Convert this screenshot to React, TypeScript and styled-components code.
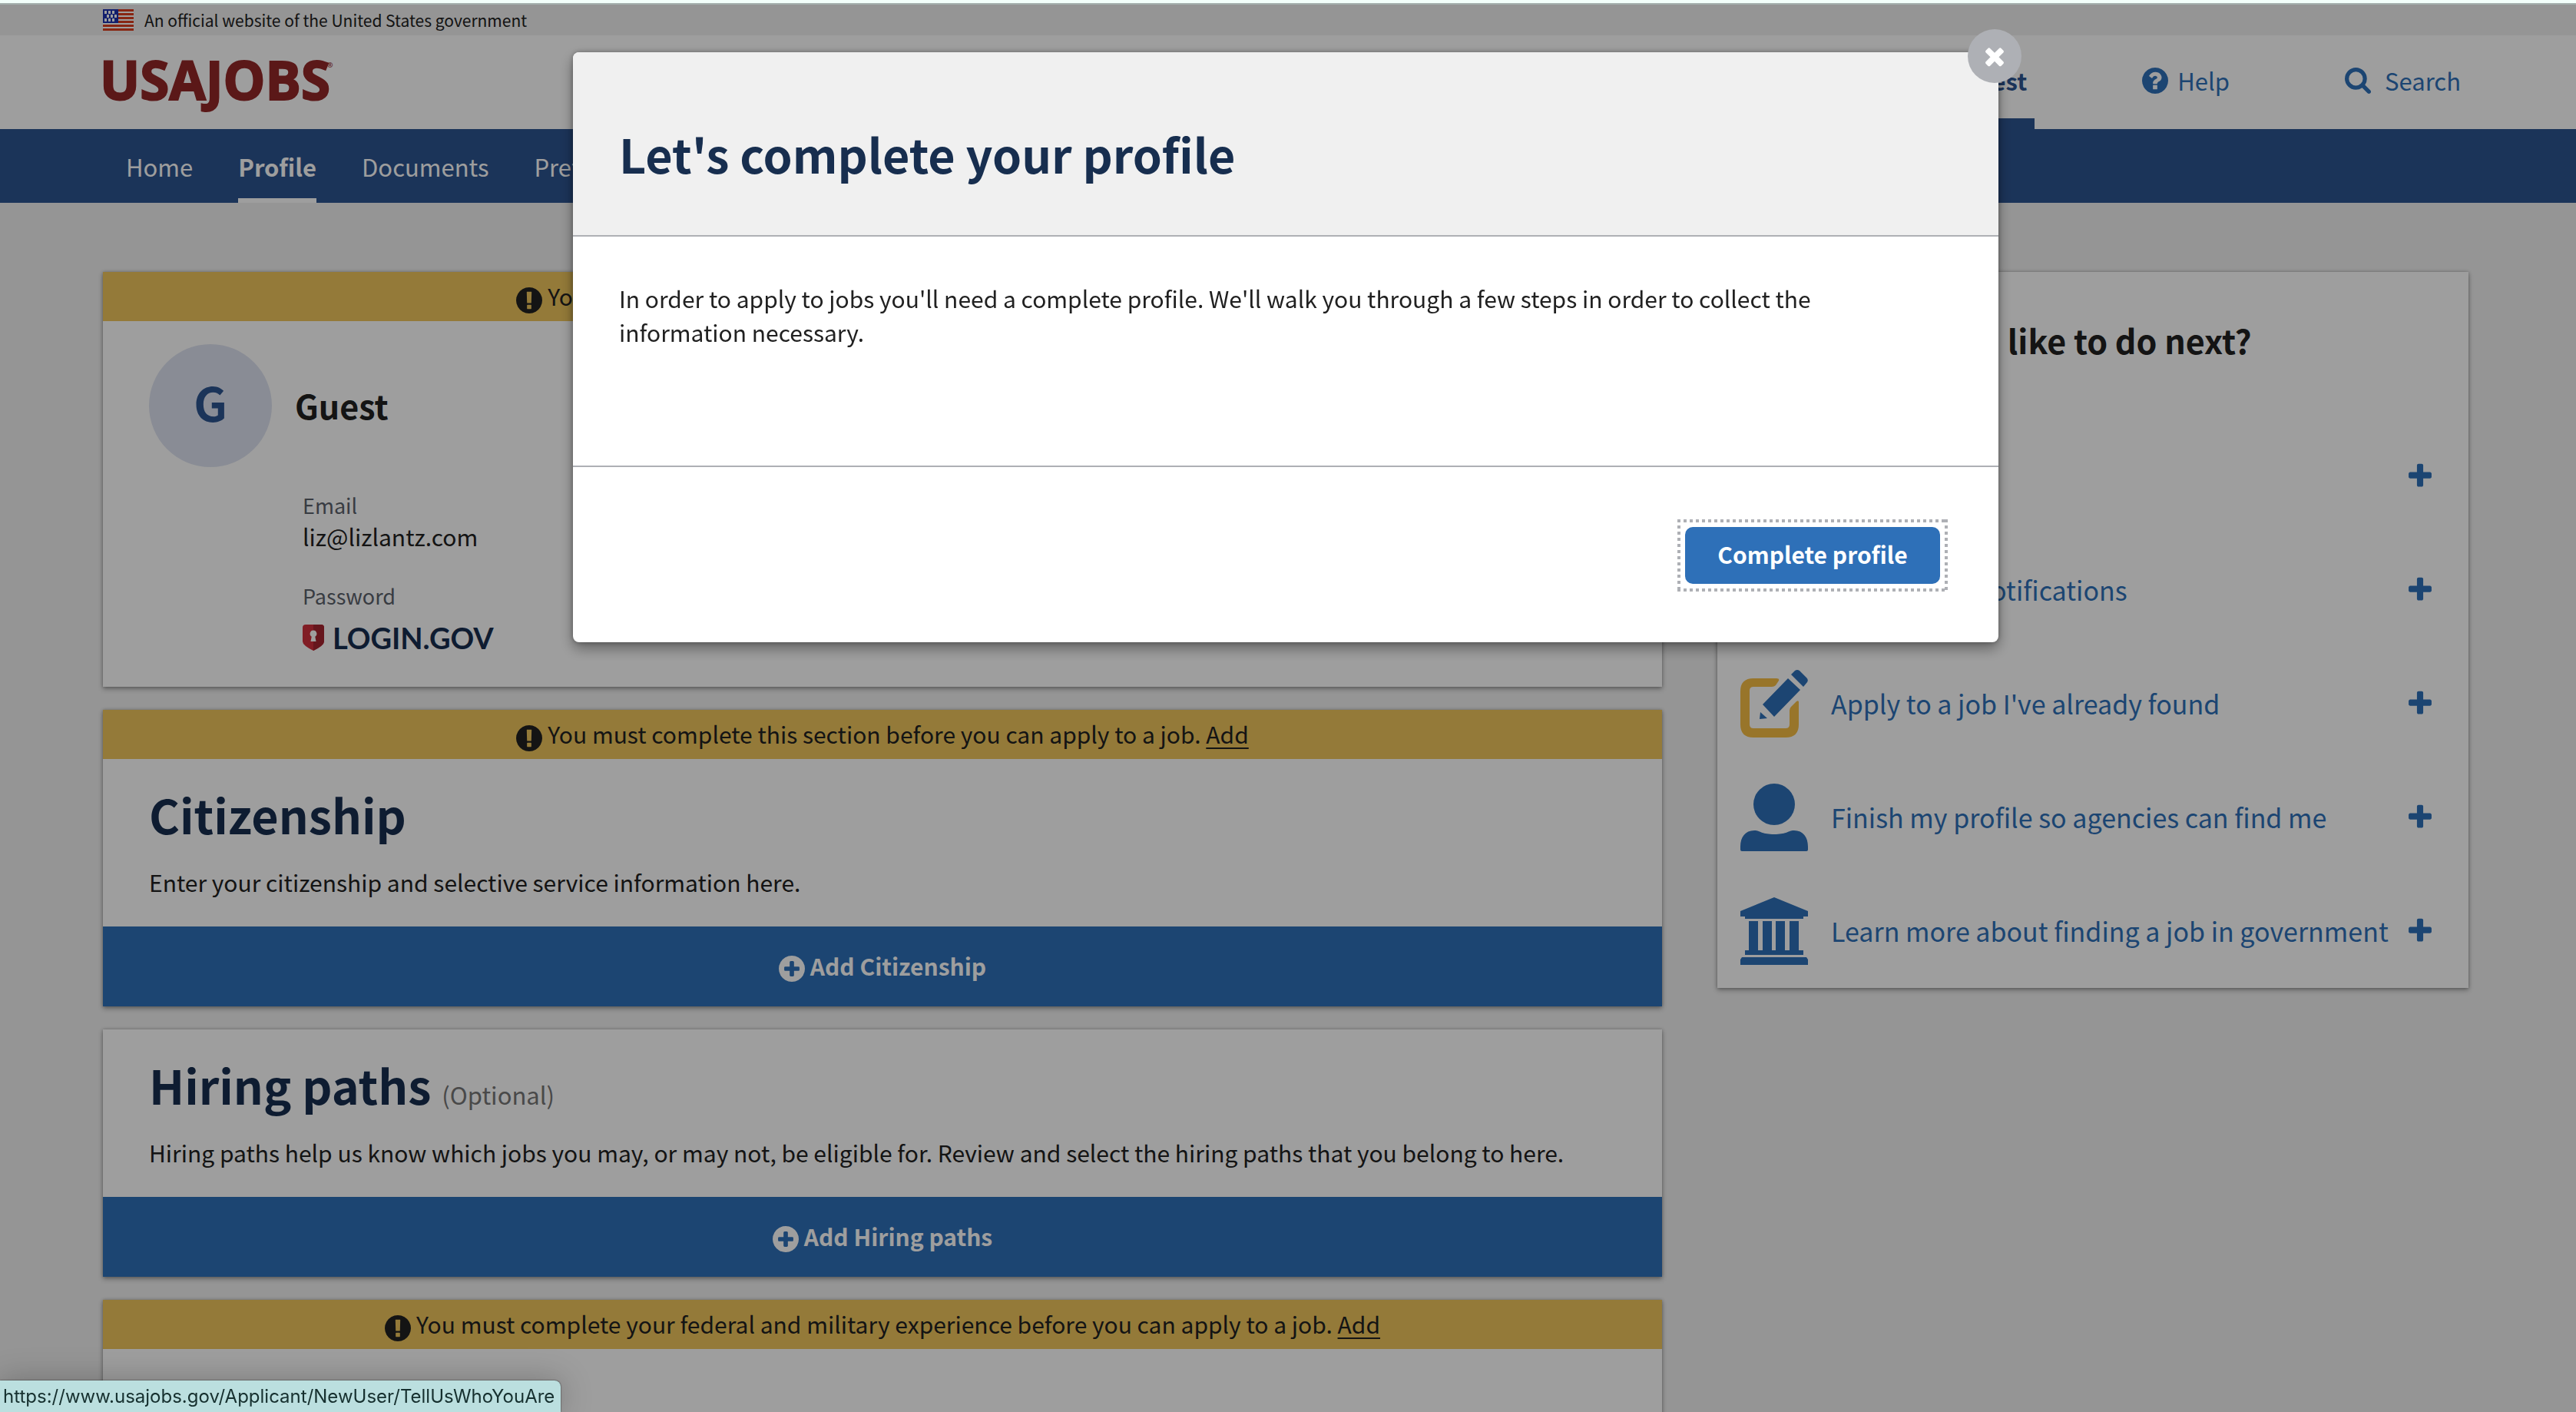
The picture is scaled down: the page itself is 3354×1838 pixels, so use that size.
import React from 'react';
import styled, { createGlobalStyle, css } from 'styled-components';

const color = {
  ink: '#212121',
  navy: '#172e4f',
  nav: '#2d5490',
  primary: '#2e70b8',
  gold: '#f5bd45',
  warning: '#efc65c',
  page: '#f0f0f0',
  line: '#aeb0b5',
  label: '#5b616b',
  muted: '#767676',
  logo: '#932828',
};

const sans = '"Noto Sans CJK SC", "Source Sans Pro", "Noto Sans", sans-serif';

const GlobalStyle = createGlobalStyle`
  *, *::before, *::after { box-sizing: border-box; }
  body {
    margin: 0;
    background: ${color.page};
    color: ${color.ink};
    font-family: ${sans};
    font-size: 30px;
    line-height: 44px;
  }
  h1, h2, p, ul, dl, dd { margin: 0; padding: 0; }
  button { font: inherit; border: 0; cursor: pointer; }
`;

const gutters = css`
  padding-left: 134px;
  padding-right: 140px;
`;

const Screen = styled.div`
  height: 100vh;
  overflow: hidden;
`;

const TopEdge = styled.div`
  height: 6px;
  background: #f3fffb;
  border-bottom: 2px solid #a5b0ae;
`;

const GovBanner = styled.div`
  ${gutters}
  display: flex;
  align-items: center;
  gap: 14px;
  height: 40px;
  font-size: 21px;
`;

const Header = styled.header`
  ${gutters}
  display: flex;
  justify-content: space-between;
  align-items: stretch;
  height: 122px;
  background: #fff;
`;

const LogoLink = styled.a`
  display: flex;
  align-items: center;

  svg { overflow: visible; }
`;

const LogoText = styled.text`
  font: 700 69px "Open Sans", sans-serif;
  fill: ${color.logo};
  stroke: ${color.logo};
  stroke-width: 2px;
`;

const LogoMark = styled.text`
  font: 700 9px "Open Sans", sans-serif;
  fill: ${color.logo};
`;

const Utilities = styled.nav`
  display: flex;
  gap: 130px;
`;

const UtilityLink = styled.a<{ $active?: boolean; $gap?: number }>`
  display: flex;
  align-items: center;
  gap: ${p => p.$gap ?? 12}px;
  padding: 10px 10px 0;
  border-bottom: 14px solid ${p => (p.$active ? color.nav : 'transparent')};
  color: ${p => (p.$active ? color.nav : color.primary)};
  font-size: 31px;
  font-weight: ${p => (p.$active ? 700 : 400)};
  text-decoration: none;
`;

const MainNav = styled.nav`
  ${gutters}
  background: ${color.nav};
`;

const NavList = styled.ul`
  display: flex;
  gap: 59px;
  padding-left: 30px;
  list-style: none;
`;

const NavLink = styled.a<{ $active?: boolean }>`
  display: block;
  padding: 27px 0 19px;
  border-bottom: 6px solid ${p => (p.$active ? '#fff' : 'transparent')};
  color: #fff;
  font-size: 31px;
  font-weight: ${p => (p.$active ? 700 : 400)};
  text-decoration: none;
`;

const Main = styled.main`
  ${gutters}
  display: grid;
  grid-template-columns: 2030fr 978fr;
  align-items: start;
  gap: 72px;
  padding-top: 90px;
`;

const Sections = styled.div`
  display: flex;
  flex-direction: column;
  gap: 30px;
`;

const Card = styled.section`
  background: #fff;
  box-shadow: 0 3px 6px rgba(0, 0, 0, 0.3), 0 0 4px rgba(0, 0, 0, 0.25);
`;

const Warning = styled.div`
  display: flex;
  justify-content: center;
  align-items: center;
  gap: 7px;
  height: 64px;
  padding-bottom: 2px;
  background: ${color.warning};

  svg { margin-top: 12px; }
  a {
    color: inherit;
    text-decoration-thickness: 2px;
    text-underline-offset: 5px;
  }
`;

const AccountBody = styled.div`
  padding: 30px 60px 44px;
`;

const Person = styled.div`
  display: flex;
  align-items: center;
  gap: 30px;
`;

const Avatar = styled.span`
  display: flex;
  justify-content: center;
  align-items: center;
  width: 160px;
  height: 160px;
  padding-bottom: 10px;
  border-radius: 50%;
  background: #dee3f0;
  color: ${color.nav};
  font-size: 61px;
  font-weight: 700;
`;

const PersonName = styled.h2`
  padding-bottom: 2px;
  font-size: 43px;
  line-height: 60px;
`;

const Details = styled.dl`
  display: flex;
  flex-direction: column;
  gap: 38px;
  padding: 30px 0 0 200px;
  line-height: 40px;
`;

const Label = styled.dt`
  color: ${color.label};
  font-size: 27px;
`;

const LoginGov = styled.span`
  display: flex;
  align-items: center;
  gap: 11px;
  padding-top: 14px;
  color: ${color.navy};
  font-family: Lato, sans-serif;
  font-size: 38px;
  font-weight: 700;
`;

const SectionBody = styled.div`
  padding: 32px 60px 36px;
`;

const SectionTitle = styled.h2`
  margin-bottom: 26px;
  color: ${color.navy};
  font-size: 61px;
  line-height: 80px;

  small {
    color: ${color.muted};
    font-size: 31px;
    font-weight: 400;
    line-height: 40px;
  }
`;

const UpcomingBody = styled.div`
  min-height: 218px;
`;

const AddButton = styled.button`
  display: flex;
  justify-content: center;
  align-items: center;
  gap: 7px;
  width: 100%;
  height: 104px;
  padding: 0 0 2px;
  background: ${color.primary};
  color: #fff;
  font-weight: 700;

  svg { margin-top: 8px; }
`;

const NextTitle = styled.h2`
  padding: 58px 28px 104px;
  font-size: 43px;
  line-height: 60px;
`;

const NextList = styled.ul`
  display: flex;
  flex-direction: column;
  gap: 60px;
  padding: 0 44px 30px 30px;
  list-style: none;
`;

const NextLink = styled.a`
  display: grid;
  grid-template-columns: 88px 1fr 38px;
  align-items: center;
  gap: 30px;
  height: 88px;
  color: ${color.primary};
  font-size: 34px;
  white-space: nowrap;
  text-decoration: none;

  > span { min-width: 0; }
`;

const Backdrop = styled.div`
  ${gutters}
  position: fixed;
  inset: 6px 0 0;
  display: flex;
  justify-content: center;
  align-items: flex-start;
  padding-top: 62px;
  background: rgba(0, 0, 0, 0.38);
`;

const Modal = styled.div`
  position: relative;
  width: 100%;
  max-width: 1856px;
  border-radius: 8px;
  background: #fff;
  box-shadow: 0 8px 18px rgba(0, 0, 0, 0.38), 0 0 6px rgba(0, 0, 0, 0.3);
`;

const ModalHeader = styled.div`
  padding: 92px 60px 66px;
  border-bottom: 2px solid ${color.line};
  border-radius: 8px 8px 0 0;
  background: ${color.page};
`;

const ModalTitle = styled.h1`
  color: ${color.navy};
  font-size: 61px;
  line-height: 80px;
`;

const ModalBody = styled.div`
  padding: 58px 120px 152px 60px;
  border-bottom: 2px solid ${color.line};
`;

const ModalFooter = styled.div`
  display: flex;
  justify-content: flex-end;
  padding: 78px 76px 76px;
`;

const PrimaryButton = styled.button`
  position: relative;
  min-width: 332px;
  height: 74px;
  padding: 0 40px 4px;
  border-radius: 10px;
  background: ${color.primary};
  color: #fff;
  font-weight: 700;

  &::before {
    content: '';
    position: absolute;
    inset: -10px;
    background:
      repeating-linear-gradient(90deg, ${color.line} 0 4px, transparent 4px 8px) 0 0 / 100% 4px no-repeat,
      repeating-linear-gradient(90deg, ${color.line} 0 4px, transparent 4px 8px) 0 100% / 100% 4px no-repeat,
      repeating-linear-gradient(${color.line} 0 4px, transparent 4px 8px) 0 0 / 4px 100% no-repeat,
      repeating-linear-gradient(${color.line} 0 4px, transparent 4px 8px) 100% 0 / 4px 100% no-repeat;
  }
`;

const CloseButton = styled.button`
  position: absolute;
  top: -30px;
  right: -30px;
  display: flex;
  justify-content: center;
  align-items: center;
  width: 70px;
  height: 70px;
  padding: 0;
  border-radius: 50%;
  background: ${color.line};
  color: #fff;
`;

const StatusBar = styled.div`
  position: fixed;
  left: 0;
  bottom: 0;
  padding: 0 8px 0 4px;
  border-radius: 0 8px 0 0;
  background: #bbdfdf;
  box-shadow: 0 0 2px rgba(0, 0, 0, 0.8), 0 0 40px rgba(0, 0, 0, 0.25);
  color: #16302f;
  font-family: Inter, sans-serif;
  font-size: 24px;
  line-height: 41px;
`;

const glyphs = {
  plus: ['0 0 1792 1792', 'M1600 736v192q0 40-28 68t-68 28h-416v416q0 40-28 68t-68 28h-192q-40 0-68-28t-28-68v-416h-416q-40 0-68-28t-28-68v-192q0-40 28-68t68-28h416v-416q0-40 28-68t68-28h192q40 0 68 28t28 68v416h416q40 0 68 28t28 68z'],
  times: ['0 0 1792 1792', 'M1490 1322q0 40-28 68l-136 136q-28 28-68 28t-68-28l-294-294-294 294q-28 28-68 28t-68-28l-136-136q-28-28-28-68t28-68l294-294-294-294q-28-28-28-68t28-68l136-136q28-28 68-28t68 28l294 294 294-294q28-28 68-28t68 28l136 136q28 28 28 68t-28 68l-294 294 294 294q28 28 28 68z'],
  question: ['128 128 1536 1536', 'M1024 1376v-192q0-14-9-23t-23-9h-192q-14 0-23 9t-9 23v192q0 14 9 23t23 9h192q14 0 23-9t9-23zm256-672q0-88-55.5-163t-138.5-116-170-41q-243 0-371 213-15 24 8 42l132 100q7 6 19 6 16 0 25-12 53-68 86-92 34-24 86-24 48 0 85.5 26t37.5 59q0 38-20 61t-68 45q-63 28-115.5 86.5t-52.5 125.5v36q0 14 9 23t23 9h192q14 0 23-9t9-23q0-19 21.5-49.5t54.5-49.5q32-18 49-28.5t46-35 44.5-48 28-60.5 12.5-81zm384 192q0 209-103 385.5t-279.5 279.5-385.5 103-385.5-103-279.5-279.5-103-385.5 103-385.5 279.5-279.5 385.5-103 385.5 103 279.5 279.5 103 385.5z'],
  search: ['64 128 1664 1664', 'M1216 832q0-185-131.5-316.5t-316.5-131.5-316.5 131.5-131.5 316.5 131.5 316.5 316.5 131.5 316.5-131.5 131.5-316.5zm512 832q0 52-38 90t-90 38q-54 0-90-38l-343-342q-179 124-399 124-143 0-273.5-55.5t-225-150-150-225-55.5-273.5 55.5-273.5 150-225 225-150 273.5-55.5 273.5 55.5 225 150 150 225 55.5 273.5q0 220-124 399l343 343q37 37 37 90z'],
  exclamation: ['128 128 1536 1536', 'M896 128q209 0 385.5 103t279.5 279.5 103 385.5-103 385.5-279.5 279.5-385.5 103-385.5-103-279.5-279.5-103-385.5 103-385.5 279.5-279.5 385.5-103zm128 1247v-190q0-14-9-23.5t-22-9.5h-192q-13 0-23 10t-10 23v190q0 13 10 23t23 10h192q13 0 22-9.5t9-23.5zm-2-344l18-621q0-12-10-18-10-8-24-8h-220q-14 0-24 8-10 6-10 18l17 621q0 10 10 17.5t24 7.5h185q14 0 23.5-7.5t10.5-17.5z'],
  plusCircle: ['128 128 1536 1536', 'M1344 960v-128q0-26-19-45t-45-19h-256v-256q0-26-19-45t-45-19h-128q-26 0-45 19t-19 45v256h-256q-26 0-45 19t-19 45v128q0 26 19 45t45 19h256v256q0 26 19 45t45 19h128q26 0 45-19t19-45v-256h256q26 0 45-19t19-45zm320-64q0 209-103 385.5t-279.5 279.5-385.5 103-385.5-103-279.5-279.5-103-385.5 103-385.5 279.5-279.5 385.5-103 385.5 103 279.5 279.5 103 385.5z'],
} as const;

function Glyph({ name, size = 34 }: { name: keyof typeof glyphs; size?: number }) {
  const [viewBox, d] = glyphs[name];
  return (
    <svg width={size} height={size} viewBox={viewBox} fill="currentColor" aria-hidden="true">
      <path d={d} />
    </svg>
  );
}

function Flag() {
  return (
    <svg width="40" height="28" viewBox="0 0 40 28" aria-hidden="true">
      <rect width="40" height="28" fill="#fff" />
      {[0, 5, 10, 15, 20, 25].map(y => <rect key={y} y={y} width="40" height="3" fill="#db3e1f" />)}
      <rect width="20" height="18" fill="#1e33b1" />
      {[[2, 2], [7, 2], [12, 2], [5, 7], [10, 7], [15, 7], [2, 12], [7, 12], [12, 12]].map(([x, y]) => (
        <rect key={`${x}-${y}`} x={x} y={y} width="3" height="4" fill="#fff" />
      ))}
    </svg>
  );
}

function Logo() {
  return (
    <svg width="300" height="88" viewBox="0 0 300 88" role="img" aria-label="USAJOBS">
      <LogoText x="-4" y="67">USAJOBS</LogoText>
      <LogoMark x="292" y="25">®</LogoMark>
    </svg>
  );
}

function Shield() {
  return (
    <svg width="28" height="34" viewBox="0 0 28 34" aria-hidden="true">
      <path d="M4 0h20q4 0 4 4v18q0 5-14 12Q0 27 0 22V4q0-4 4-4z" fill="#d0303c" />
      <path d="M14 0h10q4 0 4 4v18q0 5-14 12z" fill="#a52530" />
      <path d="M14 7.500a4.500 4.500 0 0 1 2.300 8.300L17.500 22h-7l1.200-6.200A4.500 4.500 0 0 1 14 7.500z" fill="#fff" />
    </svg>
  );
}

const Art = ({ children }: { children: React.ReactNode }) => (
  <svg width="88" height="88" viewBox="0 0 88 88" fill={color.primary} aria-hidden="true">{children}</svg>
);

const SearchArt = () => (
  <Art>
    <path fillRule="evenodd" d="M36 0a36 36 0 0 1 29 57l23 23-8 8-23-23A36 36 0 1 1 36 0zm0 12a24 24 0 1 0 0 48 24 24 0 0 0 0-48z" />
  </Art>
);

const BellArt = () => (
  <Art>
    <path d="M44 0c4 0 6 3 6 7 14 3 22 14 22 30 0 18 5 24 11 31v6H5v-6c6-7 11-13 11-31C16 21 24 10 38 7c0-4 2-7 6-7zM34 78h20a10 10 0 0 1-20 0z" />
  </Art>
);

const ApplyArt = () => (
  <Art>
    <path
      fill={color.gold}
      d="M17 11h30q4 0 3 3l-4 6q-2 2-5 2H17q-5 0-5 5v44q0 5 5 5h42q5 0 5-5V53q0-3 2-5l7-7q3-2 3 1v29q0 17-17 17H17Q0 88 0 71V28q0-17 17-17z"
    />
    <path d="M62 11l16 15-34 35-15-16zM26 55l9 8-10 1zM66 6l5-5q3-2 6 0l9 9q3 3 1 6l-5 6z" />
  </Art>
);

const ProfileArt = () => (
  <Art>
    <circle cx="44" cy="27" r="27" />
    <path d="M0 82C0 69 7 60 20 61c6 1 9 5 24 5s18-4 24-5c13-1 20 8 20 21v4q0 2-2 2H2q-2 0-2-2z" />
  </Art>
);

const GovernmentArt = () => (
  <Art>
    <path d="M44 0l44 18v7h-6v3H6v-3H0v-7zM11 31h12v38h6V31h12v38h5V31h12v38h6V31h12v38h6v6H6v-6h5zM2 78h84l2 3v7H0v-7z" />
  </Art>
);

const nextSteps = [
  { text: 'Search jobs', Icon: SearchArt },
  { text: 'Receive job notifications', Icon: BellArt },
  { text: "Apply to a job I've already found", Icon: ApplyArt },
  { text: 'Finish my profile so agencies can find me', Icon: ProfileArt },
  { text: 'Learn more about finding a job in government', Icon: GovernmentArt },
];

function WarningBar({ children }: { children: React.ReactNode }) {
  return (
    <Warning>
      <Glyph name="exclamation" />
      <span>{children} <a href="#add">Add</a></span>
    </Warning>
  );
}

function AddAction({ children }: { children: React.ReactNode }) {
  return (
    <AddButton type="button">
      <Glyph name="plusCircle" />
      <span>{children}</span>
    </AddButton>
  );
}

export default function App() {
  return (
    <Screen>
      <GlobalStyle />
      <TopEdge />
      <GovBanner>
        <Flag />
        <span>An official website of the United States government</span>
      </GovBanner>
      <Header>
        <LogoLink href="#home"><Logo /></LogoLink>
        <Utilities aria-label="Account">
          <UtilityLink href="#account" $active>Guest</UtilityLink>
          <UtilityLink href="#help"><Glyph name="question" />Help</UtilityLink>
          <UtilityLink href="#search" $gap={18}><Glyph name="search" />Search</UtilityLink>
        </Utilities>
      </Header>
      <MainNav aria-label="Main">
        <NavList>
          <li><NavLink href="#home">Home</NavLink></li>
          <li><NavLink href="#profile" $active aria-current="page">Profile</NavLink></li>
          <li><NavLink href="#documents">Documents</NavLink></li>
          <li><NavLink href="#preferences">Preferences</NavLink></li>
        </NavList>
      </MainNav>

      <Main>
        <Sections>
          <Card>
            <WarningBar>You must complete this section before you can apply to a job.</WarningBar>
            <AccountBody>
              <Person>
                <Avatar>G</Avatar>
                <PersonName>Guest</PersonName>
              </Person>
              <Details>
                <div>
                  <Label>Email</Label>
                  <dd>liz@lizlantz.com</dd>
                </div>
                <div>
                  <Label>Password</Label>
                  <dd><LoginGov><Shield />LOGIN.GOV</LoginGov></dd>
                </div>
              </Details>
            </AccountBody>
          </Card>
          <Card>
            <WarningBar>You must complete this section before you can apply to a job.</WarningBar>
            <SectionBody>
              <SectionTitle>Citizenship</SectionTitle>
              <p>Enter your citizenship and selective service information here.</p>
            </SectionBody>
            <AddAction>Add Citizenship</AddAction>
          </Card>
          <Card>
            <SectionBody>
              <SectionTitle>Hiring paths <small>(Optional)</small></SectionTitle>
              <p>
                Hiring paths help us know which jobs you may, or may not, be eligible for. Review and
                select the hiring paths that you belong to here.
              </p>
            </SectionBody>
            <AddAction>Add Hiring paths</AddAction>
          </Card>
          <Card>
            <WarningBar>You must complete your federal and military experience before you can apply to a job.</WarningBar>
            <UpcomingBody />
          </Card>
        </Sections>

        <Card as="aside">
          <NextTitle>What would you like to do next?</NextTitle>
          <NextList>
            {nextSteps.map(({ text, Icon }) => (
              <li key={text}>
                <NextLink href="#next">
                  <Icon />
                  <span>{text}</span>
                  <Glyph name="plus" size={38} />
                </NextLink>
              </li>
            ))}
          </NextList>
        </Card>
      </Main>

      <Backdrop>
        <Modal role="dialog" aria-modal="true" aria-labelledby="modal-title">
          <ModalHeader>
            <ModalTitle id="modal-title">Let's complete your profile</ModalTitle>
          </ModalHeader>
          <ModalBody>
            <p>
              In order to apply to jobs you'll need a complete profile. We'll walk you through a few
              steps in order to collect the information necessary.
            </p>
          </ModalBody>
          <ModalFooter>
            <PrimaryButton type="button">Complete profile</PrimaryButton>
          </ModalFooter>
          <CloseButton type="button" aria-label="Close"><Glyph name="times" size={36} /></CloseButton>
        </Modal>
      </Backdrop>
      <StatusBar>https://www.usajobs.gov/Applicant/NewUser/TellUsWhoYouAre</StatusBar>
    </Screen>
  );
}
